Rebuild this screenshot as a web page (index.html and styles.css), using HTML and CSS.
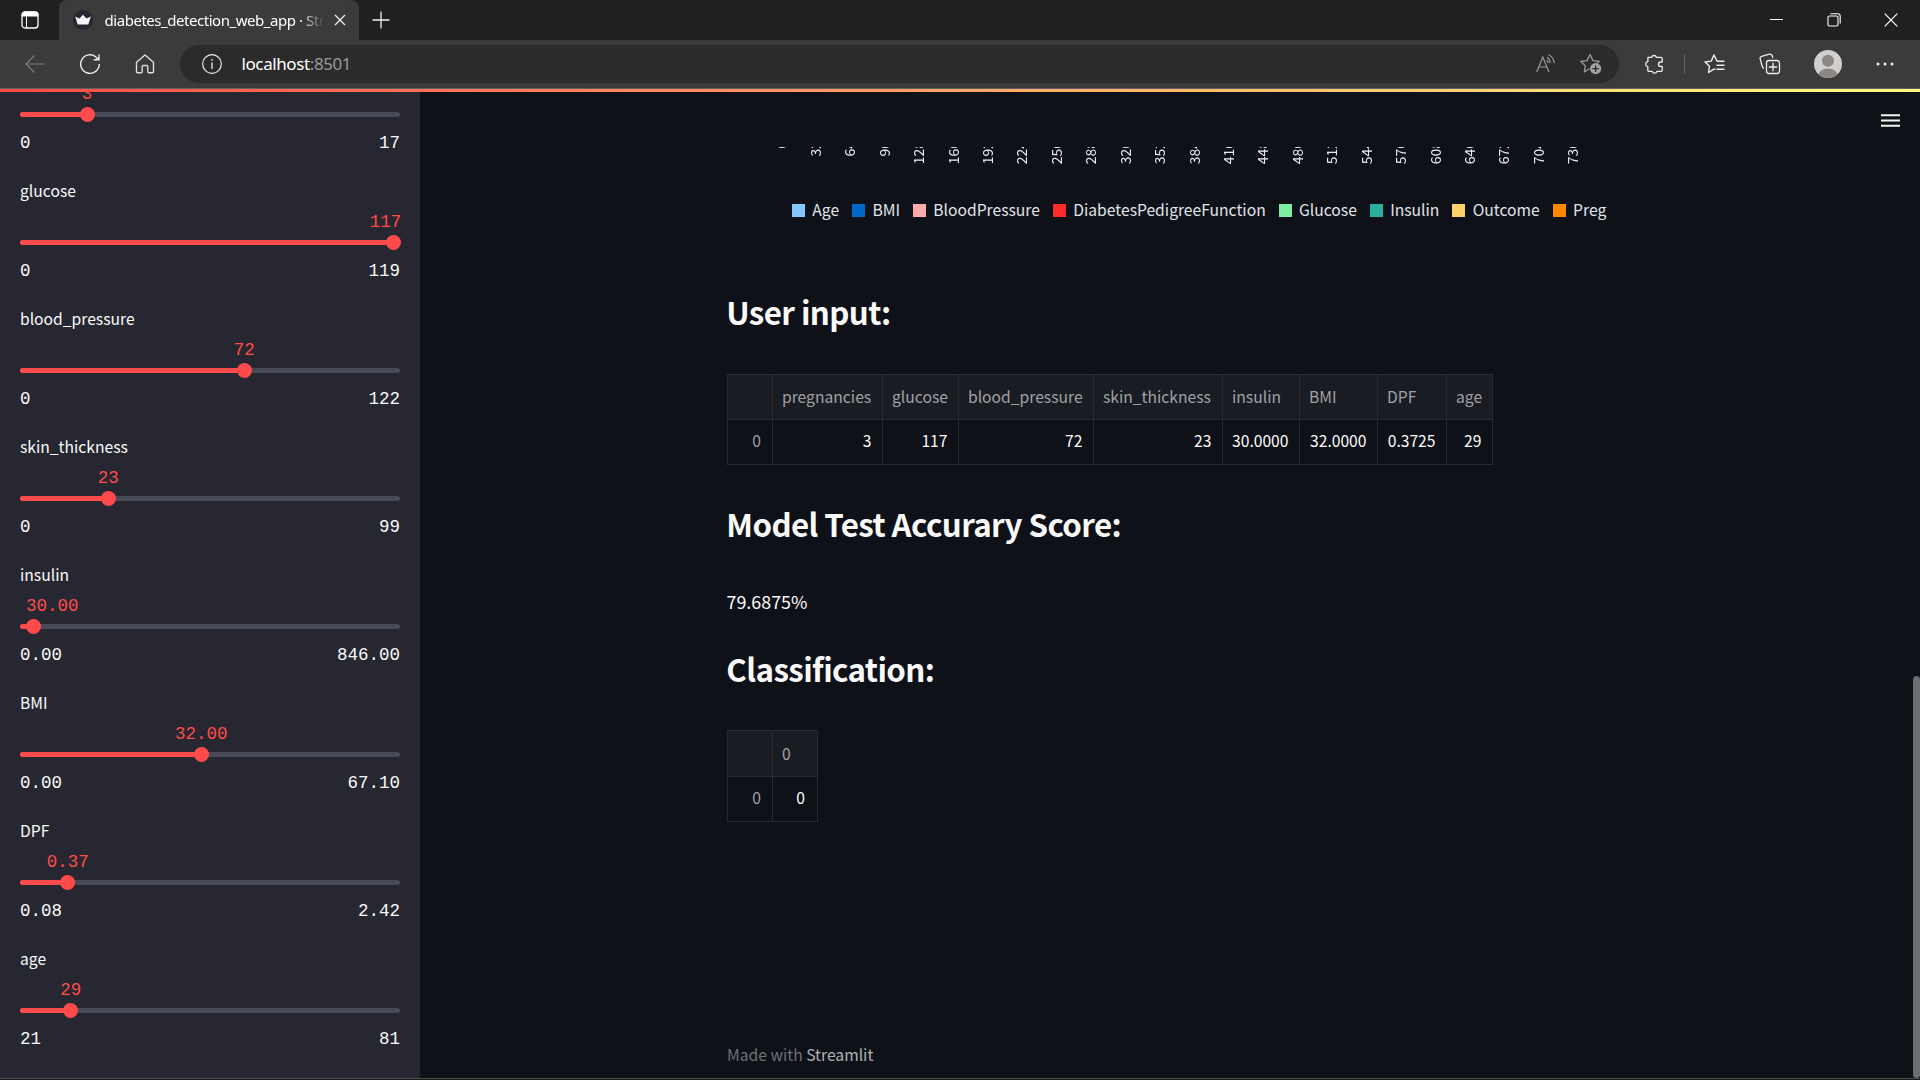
FILE: index.html
```html
<!DOCTYPE html>
<html lang="en">
<head>
<meta charset="utf-8">
<title>diabetes_detection_web_app · Streamlit</title>
<link rel="stylesheet" href="styles.css">
</head>
<body>
<div class="window">
  <header class="tabstrip">
    <svg class="icon tab-actions" width="20" height="20" viewBox="0 0 20 20"><rect x="2" y="2" width="16" height="16" rx="3" fill="none" stroke="#fff" stroke-width="1.3"/><path d="M2 6V4.500Q2 2 4.500 2h11Q18 2 18 4.500V6zM6.500 6v12" fill="#fff" stroke="#fff" stroke-width="1"/></svg>
    <div class="tab">
      <svg class="icon" width="20" height="20" viewBox="0 0 20 20"><circle cx="10" cy="10" r="10" fill="#262730"/><path d="M2.200 6.500 6.500 8.500 10 4.700l3.500 3.800 4.300-2-2.500 8H4.700z" fill="#f5f5f5"/></svg>
      <span class="tab-title">diabetes_detection_web_app · Streamlit</span>
      <svg class="icon" width="12" height="12" viewBox="0 0 12 12"><path d="M1 1l10 10M11 1 1 11" stroke="#eee" stroke-width="1.300"/></svg>
    </div>
    <svg class="icon new-tab" width="18" height="18" viewBox="0 0 18 18"><path d="M9 .500v17M.500 9h17" stroke="#eee" stroke-width="1.300"/></svg>
    <div class="window-buttons">
      <svg class="icon" width="14" height="14" viewBox="0 0 14 14"><path d="M0 6.500h13" stroke="#fff" stroke-width="1"/></svg>
      <svg class="icon" width="14" height="14" viewBox="0 0 14 14"><rect x="1" y="3" width="10" height="10" rx="1.500" fill="none" stroke="#fff" stroke-width="1.100"/><path d="M3.500.800h7.300q2.400 0 2.400 2.400v7.300" fill="none" stroke="#fff" stroke-width="1.100"/></svg>
      <svg class="icon" width="14" height="14" viewBox="0 0 14 14"><path d="M.700.700l12.600 12.600M13.300.700.700 13.300" stroke="#fff" stroke-width="1.200"/></svg>
    </div>
  </header>
  <nav class="toolbar">
    <svg class="icon back" width="20" height="20" viewBox="0 0 20 20"><path d="M19.500 10H1M9.500 1.500 1 10l8.500 8.500" fill="none" stroke="#7b7b7b" stroke-width="1.200"/></svg>
    <svg class="icon reload" width="22" height="22" viewBox="0 0 22 22"><path d="M20.300 11A9.300 9.300 0 1 1 17.500 4.400L19.800 6.700M20 1.500v5.300h-5.300" fill="none" stroke="#eee" stroke-width="1.400"/></svg>
    <svg class="icon home" width="20" height="20" viewBox="0 0 20 20"><path d="M1.500 8.300 10 1l8.500 7.300v9.200q0 1.300-1.300 1.300h-3.400q-1 0-1-1v-5.300q0-1-1-1H8.200q-1 0-1 1v5.300q0 1-1 1H2.800q-1.300 0-1.300-1.300z" fill="none" stroke="#ddd" stroke-width="1.400" stroke-linejoin="round"/></svg>
    <div class="address">
      <svg class="icon info" width="20" height="20" viewBox="0 0 20 20"><circle cx="10" cy="10" r="9.300" fill="none" stroke="#eee" stroke-width="1.200"/><path d="M10 8.500v6.500M10 5v1.800" stroke="#eee" stroke-width="1.300"/></svg>
      <span class="url">localhost<span class="port">:8501</span></span>
      <svg class="icon read-aloud" width="20" height="20" viewBox="0 0 20 20"><path d="M.700 18 6.800 3 13 18M3 13h7.700M11 3.300q3 1.700 3.200 5.700M12.500.800q5 2.400 5.800 8.200M10.600 6q1.400 1 1.500 3" fill="none" stroke="#9a9a9a" stroke-width="1.200"/></svg>
      <svg class="icon" width="22" height="22" viewBox="0 0 22 22"><path d="M9.500 15.800 4.300 19l1-6.200L.800 8.500l6.200-.900L10 1.500l3 6.100 6.200.900-2 1.900" fill="none" stroke="#9a9a9a" stroke-width="1.300" stroke-linejoin="round"/><circle cx="15.600" cy="15.600" r="5.600" fill="#a3a3a3"/><path d="M15.600 12.300v6.600M12.300 15.600h6.600" stroke="#2b2b2b" stroke-width="1.300"/></svg>
    </div>
    <svg class="icon extensions" width="20" height="20" viewBox="0 0 20 20"><path d="M4 3.300h3.600a2.500 2.500 0 0 1 4.800 0H17q1.200 0 1.200 1.200V8h-1.500a2 2 0 0 0 0 4.400h1.500v3.800q0 1.200-1.200 1.200h-4a2.500 2.500 0 0 1-4.800 0H5q-1.200 0-1.200-1.200v-3.400a2.600 2.600 0 0 1 0-5.100z" fill="none" stroke="#eee" stroke-width="1.300" stroke-linejoin="round"/></svg>
    <span class="divider"></span>
    <svg class="icon favorites" width="21" height="20" viewBox="0 0 21 20"><path d="M11.500 15.300 10 15.200 4.500 18.500l1-6.300L1 8l6.200-.900L10 1l2.800 5.700M12.500 7.200H20.500M12.500 11.200H20.500M12.500 15.200H20.500" fill="none" stroke="#eee" stroke-width="1.400" stroke-linejoin="round"/></svg>
    <svg class="icon collections" width="22" height="22" viewBox="0 0 22 22"><rect x="7.500" y="7.500" width="13" height="13" rx="2.500" fill="none" stroke="#eee" stroke-width="1.300"/><path d="M14 9.800v8.400M9.800 14h8.400M5 15.500Q3.700 14.800 3.300 13.500L1.200 6.100Q.700 4 2.700 3.400L10.300 1.200Q12.400.800 13.200 2.800L13.900 5" fill="none" stroke="#eee" stroke-width="1.300"/></svg>
    <svg class="icon profile" width="28" height="28" viewBox="0 0 28 28"><defs><clipPath id="avatar"><circle cx="14" cy="14" r="14"/></clipPath></defs><g clip-path="url(#avatar)"><path d="M0 0h28v28H0z" fill="#d2d0ce"/><circle cx="14" cy="10.700" r="6" fill="#8c8785"/><ellipse cx="14" cy="26" rx="10" ry="7.500" fill="#8c8785"/></g></svg>
    <svg class="icon more" width="18" height="4" viewBox="0 0 18 4"><circle cx="2" cy="2" r="1.500" fill="#eee"/><circle cx="9" cy="2" r="1.500" fill="#eee"/><circle cx="16" cy="2" r="1.500" fill="#eee"/></svg>
  </nav>
  <div class="decoration"></div>
  <div class="app">
    <aside class="sidebar">
      <div class="sliders">
        <div class="slider"><label></label><div class="value"><b style="left:17.65%">3</b></div><div class="track"><i style="width:17.65%"></i><u></u></div><div class="range"><span>0</span><span>17</span></div></div>
        <div class="slider"><label>glucose</label><div class="value"><b style="left:96.2%">117</b></div><div class="track"><i style="width:98.3%"></i><u></u></div><div class="range"><span>0</span><span>119</span></div></div>
        <div class="slider"><label>blood_pressure</label><div class="value"><b style="left:59.02%">72</b></div><div class="track"><i style="width:59.02%"></i><u></u></div><div class="range"><span>0</span><span>122</span></div></div>
        <div class="slider"><label>skin_thickness</label><div class="value"><b style="left:23.23%">23</b></div><div class="track"><i style="width:23.23%"></i><u></u></div><div class="range"><span>0</span><span>99</span></div></div>
        <div class="slider"><label>insulin</label><div class="value"><b style="left:8.5%">30.00</b></div><div class="track"><i style="width:3.55%"></i><u></u></div><div class="range"><span>0.00</span><span>846.00</span></div></div>
        <div class="slider"><label>BMI</label><div class="value"><b style="left:47.69%">32.00</b></div><div class="track"><i style="width:47.69%"></i><u></u></div><div class="range"><span>0.00</span><span>67.10</span></div></div>
        <div class="slider"><label>DPF</label><div class="value"><b style="left:12.6%">0.37</b></div><div class="track"><i style="width:12.5%"></i><u></u></div><div class="range"><span>0.08</span><span>2.42</span></div></div>
        <div class="slider"><label>age</label><div class="value"><b style="left:13.33%">29</b></div><div class="track"><i style="width:13.33%"></i><u></u></div><div class="range"><span>21</span><span>81</span></div></div>
      </div>
    </aside>
    <main class="main">
      <svg class="menu" width="19" height="13" viewBox="0 0 19 13"><path d="M0 1.200h19M0 6.500h19M0 11.800h19" stroke="#f4f4f0" stroke-width="2"/></svg>
      <div class="axis"><span>0</span><span>32</span><span>64</span><span>96</span><span>128</span><span>160</span><span>192</span><span>224</span><span>256</span><span>288</span><span>320</span><span>352</span><span>384</span><span>416</span><span>448</span><span>480</span><span>512</span><span>544</span><span>576</span><span>608</span><span>640</span><span>672</span><span>704</span><span>736</span></div>
      <div class="legend">
        <span class="key age">Age</span><span class="key bmi">BMI</span><span class="key pressure">BloodPressure</span><span class="key pedigree">DiabetesPedigreeFunction</span><span class="key glucose">Glucose</span><span class="key insulin">Insulin</span><span class="key outcome">Outcome</span><span class="key preg">Preg</span>
      </div>
      <h2 class="input-title">User input:</h2>
      <table class="input-table">
        <colgroup><col class="w-index"><col class="w-preg"><col class="w-glucose"><col class="w-pressure"><col class="w-skin"><col class="w-insulin"><col class="w-bmi"><col class="w-dpf"><col class="w-age"></colgroup>
        <tr><th></th><th>pregnancies</th><th>glucose</th><th>blood_pressure</th><th>skin_thickness</th><th>insulin</th><th>BMI</th><th>DPF</th><th>age</th></tr>
        <tr><td>0</td><td>3</td><td>117</td><td>72</td><td>23</td><td>30.0000</td><td>32.0000</td><td>0.3725</td><td>29</td></tr>
      </table>
      <h2 class="score-title">Model Test Accurary Score:</h2>
      <p class="score">79.6875%</p>
      <h2 class="class-title">Classification:</h2>
      <table class="class-table">
        <colgroup><col class="w-index"><col class="w-class"></colgroup>
        <tr><th></th><th>0</th></tr>
        <tr><td>0</td><td>0</td></tr>
      </table>
      <footer>Made with <a>Streamlit</a></footer>
      <div class="scrollbar"></div>
    </main>
  </div>
  <div class="window-edge"></div>
</div>
</body>
</html>
```
FILE: styles.css
```css
* { box-sizing: border-box; }
body {
  margin: 0;
  background: #0e1117;
  color: #fafafa;
  font-family: "Noto Sans CJK SC", sans-serif;
  font-size: 15.67px;
}
.window { width: 1920px; height: 1080px; display: flex; flex-direction: column; overflow: hidden; }
.icon { display: block; flex: none; }

/* Browser chrome */
.tabstrip { height: 40px; flex: none; display: flex; align-items: center; background: #202020; font-family: "Noto Sans", sans-serif; }
.tab-actions { margin-left: 20px; }
.tab { width: 300px; height: 40px; margin-left: 19px; padding-left: 14px; display: flex; align-items: center; background: #3b3b3b; border-radius: 8px 8px 0 0; }
.tab-title {
  width: 219px; margin: 0 10px 0 11.5px; overflow: hidden; white-space: nowrap;
  font-size: 15px; letter-spacing: -0.46px; line-height: 24px; color: #fff;
  -webkit-mask-image: linear-gradient(90deg, #000 195px, transparent 219px);
  mask-image: linear-gradient(90deg, #000 195px, transparent 219px);
}
.new-tab { margin-left: 13px; }
.window-buttons { margin-left: auto; margin-right: 22px; display: flex; gap: 43px; }
.toolbar { height: 48px; flex: none; display: flex; align-items: center; background: #3b3b3b; }
.back { margin-left: 25px; }
.reload { margin-left: 34px; }
.home { margin-left: 34px; }
.address { width: 1439px; height: 38px; margin-left: 25px; padding: 0 17px 0 22px; display: flex; align-items: center; border-radius: 19px; background: #2b2b2b; }
.url { margin-left: 19.5px; margin-right: auto; font-family: "Noto Sans", sans-serif; font-size: 17px; letter-spacing: -0.4px; line-height: 24px; color: #fff; }
.port { color: #9a9a9a; }
.read-aloud { margin-right: 24px; }
.extensions { margin-left: 25px; }
.divider { width: 1px; height: 20px; margin-left: 20px; background: #646464; }
.favorites { margin-left: 19px; }
.collections { margin-left: 34px; }
.profile { margin-left: 33px; }
.more { margin-left: 34px; }
.decoration { height: 4px; flex: none; border-top: 1px solid #606060; background: linear-gradient(90deg, #ff4b4b, #fffd80); }

/* App */
.app { height: 986px; flex: none; display: flex; overflow: hidden; }
.sidebar { width: 420px; height: 986px; flex: none; padding: 0 20px; overflow: hidden; background: #262730; }
.sliders { margin-top: -42px; }
.slider { height: 128px; display: flex; flex-direction: column; }
.slider label { height: 26px; line-height: 26px; }
.value { height: 36px; position: relative; font: 17.5px/20px "Liberation Mono", monospace; color: #ff4b4b; }
.value b { position: absolute; top: 8px; transform: translateX(-50%); font-weight: 400; }
.track { height: 5px; display: flex; align-items: center; border-radius: 3px; background: #484a55; }
.track i { height: 5px; flex: none; border-radius: 3px; background: #ff4b4b; }
.track u { width: 15px; height: 15px; flex: none; margin-left: -7.5px; border-radius: 50%; background: #ff4b4b; }
.range { margin-top: 16px; display: flex; justify-content: space-between; font: 17.5px/20px "Liberation Mono", monospace; }
.main { flex: 1; position: relative; padding-left: 307px; display: flex; flex-direction: column; align-items: flex-start; }
.menu { position: absolute; right: 20px; top: 22px; }
.scrollbar { position: absolute; right: 0; top: 584px; width: 7px; height: 402px; border-radius: 4px; background: #6c6d71; }
.axis { margin: 55px 0 0 36.5px; height: 19px; display: flex; align-items: flex-start; overflow: hidden; font-size: 14px; color: #e6eaf1; }
.axis span { width: 34.43px; margin-top: -6px; line-height: 34.43px; writing-mode: vertical-rl; transform: rotate(180deg); }
.legend { margin: 31px 0 0 65px; display: flex; align-items: center; line-height: 26px; color: #e0e4eb; white-space: nowrap; }
.key { display: flex; align-items: center; gap: 7.3px; margin-right: 13px; }
.key::before { content: ""; width: 13px; height: 13px; margin-top: 1px; background: var(--swatch); }
.age { --swatch: #83c9ff; }
.bmi { --swatch: #0068c9; }
.pressure { --swatch: #ffabab; }
.pedigree { --swatch: #ff2b2b; }
.glucose { --swatch: #7defa1; }
.insulin { --swatch: #29b09d; }
.outcome { --swatch: #ffd16a; }
.preg { --swatch: #ff8700; }
h2 { margin: 0 0 0 -0.7px; font-size: 31.3px; font-weight: 700; letter-spacing: -0.6px; line-height: 42px; white-space: nowrap; }
.input-title { margin-top: 68px; }
table { border-collapse: collapse; table-layout: fixed; line-height: 24px; }
th, td { height: 45px; padding: 0 9px; border: 1px solid #282b30; white-space: nowrap; }
th { text-align: left; font-weight: 400; color: #a0a1a4; background: #1a1c23; }
td { text-align: right; padding: 0 10.5px 3px 0; }
td:first-child { color: #a0a1a4; padding-right: 11px; }
.input-table { margin-top: 41px; width: 766px; }
.w-index { width: 45px; }
.w-preg { width: 110px; }
.w-glucose { width: 76px; }
.w-pressure { width: 135px; }
.w-skin { width: 129px; }
.w-insulin { width: 77px; }
.w-bmi { width: 78px; }
.w-dpf { width: 69px; }
.w-age { width: 46px; }
.w-class { width: 45px; }
.score-title { margin-top: 38px; }
.score { margin: 42px 0 0 -0.5px; font-size: 17.9px; line-height: 28px; }
.class-title { margin-top: 33px; }
.class-table { margin-top: 40px; width: 91px; }
.class-table th { height: 46px; }
.class-table td { padding-right: 12px; }
.class-table td:first-child { padding-right: 11px; }
footer { margin-top: 220px; line-height: 26px; color: #6f7176; }
footer a { color: #b0b1b4; }
.window-edge { height: 2px; flex: none; border-top: 1px solid #4a4a4a; background: #191919; }
```
